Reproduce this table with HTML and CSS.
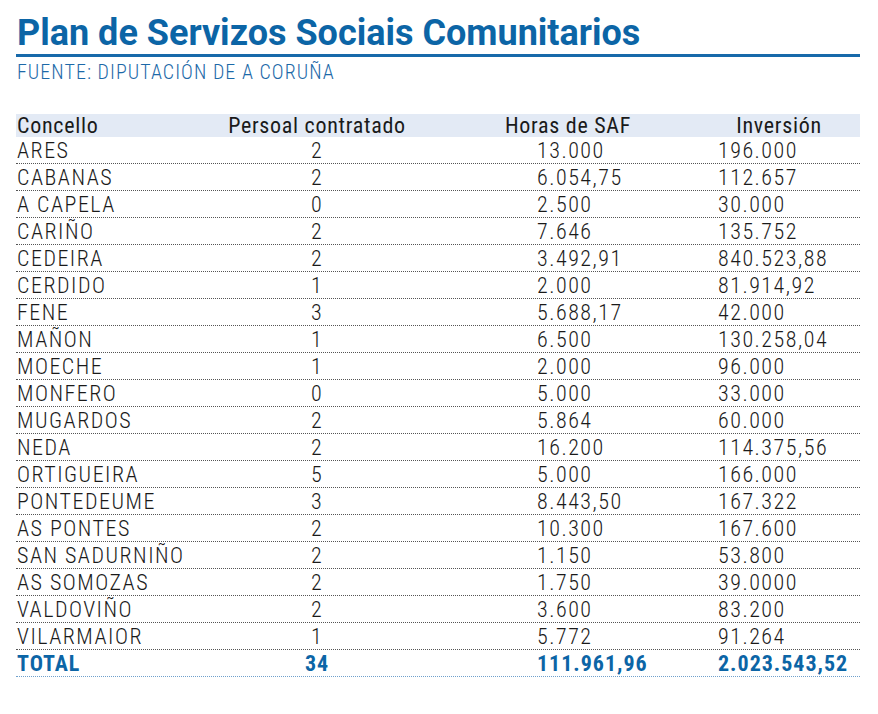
FILE: index.html
```html
<!DOCTYPE html>
<html>
<head>
<meta charset="utf-8">
<link rel="stylesheet" href="styles.css">
</head>
<body>
<div class="page">
  <h1 class="title">Plan de Servizos Sociais Comunitarios</h1>
  <div class="source">FUENTE: DIPUTACIÓN DE A CORUÑA</div>
  <div class="table">
    <div class="row head">
      <div class="c1">Concello</div><div class="c2">Persoal contratado</div><div class="c3">Horas de SAF</div><div class="c4">Inversión</div>
    </div>
    <div class="row"><div class="c1">ARES</div><div class="c2">2</div><div class="c3">13.000</div><div class="c4">196.000</div></div>
    <div class="row"><div class="c1">CABANAS</div><div class="c2">2</div><div class="c3">6.054,75</div><div class="c4">112.657</div></div>
    <div class="row"><div class="c1">A CAPELA</div><div class="c2">0</div><div class="c3">2.500</div><div class="c4">30.000</div></div>
    <div class="row"><div class="c1">CARIÑO</div><div class="c2">2</div><div class="c3">7.646</div><div class="c4">135.752</div></div>
    <div class="row"><div class="c1">CEDEIRA</div><div class="c2">2</div><div class="c3">3.492,91</div><div class="c4">840.523,88</div></div>
    <div class="row"><div class="c1">CERDIDO</div><div class="c2">1</div><div class="c3">2.000</div><div class="c4">81.914,92</div></div>
    <div class="row"><div class="c1">FENE</div><div class="c2">3</div><div class="c3">5.688,17</div><div class="c4">42.000</div></div>
    <div class="row"><div class="c1">MAÑON</div><div class="c2">1</div><div class="c3">6.500</div><div class="c4">130.258,04</div></div>
    <div class="row"><div class="c1">MOECHE</div><div class="c2">1</div><div class="c3">2.000</div><div class="c4">96.000</div></div>
    <div class="row"><div class="c1">MONFERO</div><div class="c2">0</div><div class="c3">5.000</div><div class="c4">33.000</div></div>
    <div class="row"><div class="c1">MUGARDOS</div><div class="c2">2</div><div class="c3">5.864</div><div class="c4">60.000</div></div>
    <div class="row"><div class="c1">NEDA</div><div class="c2">2</div><div class="c3">16.200</div><div class="c4">114.375,56</div></div>
    <div class="row"><div class="c1">ORTIGUEIRA</div><div class="c2">5</div><div class="c3">5.000</div><div class="c4">166.000</div></div>
    <div class="row"><div class="c1">PONTEDEUME</div><div class="c2">3</div><div class="c3">8.443,50</div><div class="c4">167.322</div></div>
    <div class="row"><div class="c1">AS PONTES</div><div class="c2">2</div><div class="c3">10.300</div><div class="c4">167.600</div></div>
    <div class="row"><div class="c1">SAN SADURNIÑO</div><div class="c2">2</div><div class="c3">1.150</div><div class="c4">53.800</div></div>
    <div class="row"><div class="c1">AS SOMOZAS</div><div class="c2">2</div><div class="c3">1.750</div><div class="c4">39.0000</div></div>
    <div class="row"><div class="c1">VALDOVIÑO</div><div class="c2">2</div><div class="c3">3.600</div><div class="c4">83.200</div></div>
    <div class="row"><div class="c1">VILARMAIOR</div><div class="c2">1</div><div class="c3">5.772</div><div class="c4">91.264</div></div>
    <div class="row total"><div class="c1">TOTAL</div><div class="c2">34</div><div class="c3">111.961,96</div><div class="c4">2.023.543,52</div></div>
  </div>
</div>
</body>
</html>
```

FILE: styles.css
```css
html, body {
  margin: 0;
  padding: 0;
  background: #ffffff;
}
.page {
  width: 878px;
  height: 714px;
  padding: 0 18px 0 16px;
  box-sizing: border-box;
  font-family: Roboto, "Noto Sans", sans-serif;
  font-stretch: condensed;
}
.title {
  margin: 0;
  padding: 13px 0 1px 1px;
  font-size: 36px;
  line-height: 40px;
  font-weight: 700;
  font-stretch: normal;
  color: #0c65a6;
  border-bottom: 3px solid #1769aa;
  white-space: nowrap;
}
.source {
  margin-top: 3px;
  padding-left: 1px;
  font-size: 20px;
  line-height: 24px;
  font-weight: 300;
  color: #1c69a8;
  letter-spacing: 1.05px;
}
.table {
  margin-top: 30px;
  font-size: 22px;
  color: #1a1a1a;
}
.row {
  display: grid;
  grid-template-columns: 180px 242px 260px 162px;
  height: 27px;
  box-sizing: border-box;
  border-bottom: 1px dotted #555555;
  line-height: 27px;
  font-weight: 300;
  letter-spacing: 1.5px;
  white-space: nowrap;
}
.c1 { padding-left: 1px; }
.row.head {
  height: 23px;
  line-height: 23px;
  background: #e3eaf5;
  border-bottom: none;
  font-weight: 400;
  letter-spacing: 0.7px;
}
.c2 { text-align: center; }
.c3 { padding-left: 99px; }
.c4 { padding-left: 20px; }
.head .c3, .head .c4 { padding-left: 0; text-align: center; }
.row.total {
  color: #0c65a6;
  font-weight: 700;
  letter-spacing: 1px;
  border-bottom-color: #6fa0cc;
}
```
